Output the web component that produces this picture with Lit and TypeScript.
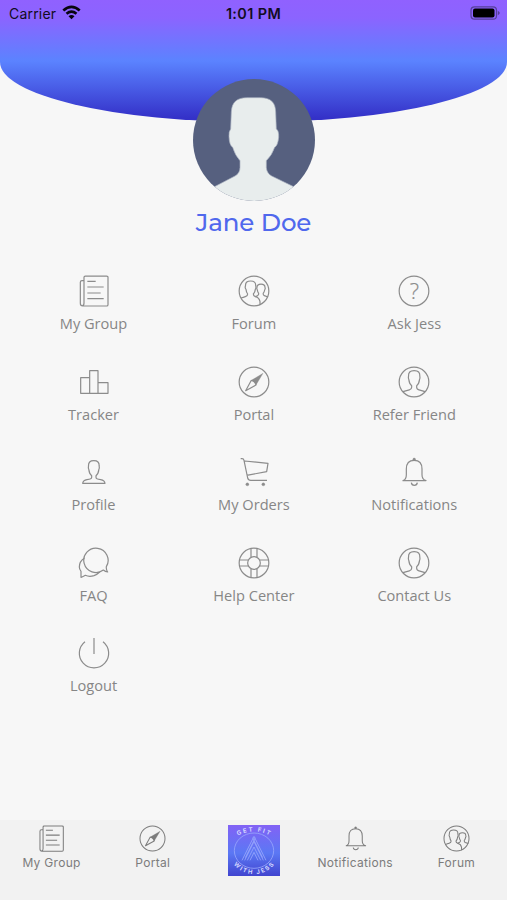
import { LitElement, html, svg, css } from "lit";
import { customElement, property } from "lit/decorators.js";

const personInCircle = svg`
  <circle cx="48" cy="48" r="44.5"/>
  <path d="M15 77 Q27 73 34 71.500 Q41 70 41 64 V59 Q34 54 32.500 41 Q30 37 31.500 31 C31 19 36 14 48.500 14 C61 14 66 19 65.500 31 Q67 37 64.500 41 Q63 54 56 59 V64 Q56 70 63 71.500 Q70 73 81 77"/>`;

const icons: Record<string, unknown> = {
  news: svg`
    <path d="M18 17 H12 Q7 17 7 22 V85 Q7 93 14 93 H86 Q90 93 90 89 V7 Q90 3.500 86 3.500 H22 Q18 3.500 18 7 V84 Q18 92 13 92"/>
    <path d="M28 19 H53 M28 36 H77 M28 54 H68 M28 71 H77"/>`,
  forum: svg`
    <circle cx="48" cy="48" r="44.500"/>
    <path d="M9 69 Q16 67 22 65 Q29 63 29 57 Q25 52 24 43 Q20 38 22.500 32 C22 22 28 18 38 18 C48 18 53.500 22 53 32 Q55 38 52 43 Q51 52 46 57 Q46 63 52 65 Q64 68 66 80 V90"/>
    <path d="M52 65 L58 62.500 Q63 60 62 55 Q59 51 58 45 Q55 40 57 37 C57 31 61 27.500 69 27.500 C77 27.500 81 31 81 37 Q83 41 80 45 Q79 51 75.500 55 Q75 60 79 62 L90 66"/>`,
  help: svg`
    <circle cx="48" cy="48" r="44.500"/>
    <text class="mark" x="49" y="71" text-anchor="middle">?</text>`,
  bars: svg`<path d="M8 35 H35 V82 H8 Z M35 82 V14 H60 V82 Z M60 50 H90 V82 H60"/>`,
  compass: svg`
    <circle cx="48" cy="48" r="44.500"/>
    <path class="solid" d="M75 22 L40 43 L48 48 L54 57 Z"/>
    <path d="M40 43 L23 74 L54 57 Q54 46 40 43"/>`,
  person: personInCircle,
  profile: svg`<path d="M14 82 Q15 73 27 71 Q41 70 41 64 V59 Q34 54 32.500 41 Q30 37 31.500 30 C31 19 36 14 47.500 14 C59 14 64 19 63.500 30 Q65 37 62.500 41 Q61 54 54 59 V64 Q54 70 68 71 Q80 73 81 82 Z"/>`,
  cart: svg`
    <path d="M8 8 H12 Q17 8 18 13 L29 66 Q31 73 38 73 H87 M20 15 L90 22 L86 47 L26 58"/>
    <circle class="solid" cx="28" cy="85" r="4.500"/><circle class="solid" cx="76" cy="85" r="4.500"/>`,
  bell: svg`
    <path d="M15 74 Q25 70 25 56 V39 Q25 13 48.500 13 Q72 13 72 39 V56 Q72 70 84 74 Z M40 80 Q41 88 49 88 Q57 88 58 80"/>
    <circle class="solid" cx="48.500" cy="10" r="4"/>`,
  chat: svg`
    <path d="M76 69 A36.500 36.500 0 1 1 85 59 Q84 68 89 75 Q82 74 76 69 Z"/>
    <path d="M19 34 Q4 43 4 60 Q4 67 9 73 V91 Q15 89 22 85 Q34 91 48 86 Q58 82 65 75"/>`,
  ring: svg`
    <circle cx="48" cy="48" r="44.500"/><circle cx="48" cy="48" r="19"/>
    <path d="M39 4 V31 M57 4 V31 M39 65 V92 M57 65 V92 M4 39 H31 M4 57 H31 M65 39 H92 M65 57 H92"/>`,
  power: svg`<path d="M21 14 A44 44 0 1 0 75 14 M48 3 V51"/>`,
};

@customElement("line-icon")
class LineIcon extends LitElement {
  @property() name = "";
  static styles = css`
    :host { display: block; width: 32px; height: 32px; }
    svg { display: block; width: 100%; height: 100%; fill: none; stroke: currentColor; stroke-width: 3.6; stroke-linejoin: round; }
    .solid { fill: currentColor; stroke-width: 1; }
    .mark { font: 300 66px "Open Sans", sans-serif; fill: currentColor; stroke-width: 0.6; }
  `;
  render() {
    return html`<svg viewBox="0 0 96 96">${icons[this.name]}</svg>`;
  }
}

@customElement("brand-logo")
class BrandLogo extends LitElement {
  static styles = css`
    :host { display: block; width: 52px; height: 51px; }
    svg { display: block; width: 100%; height: 100%; fill: none; stroke: #98a6fb; stroke-width: 2.5; }
    text { font: 700 18px "Inter", sans-serif; fill: #d5d8ff; stroke: none; letter-spacing: 5px; }
  `;
  render() {
    return html`<svg viewBox="0 0 156 153">
      <defs>
        <linearGradient id="bg" x1="0" y1="0" x2="0" y2="1">
          <stop offset="0" stop-color="#8262f5"/><stop offset=".55" stop-color="#5b78f4"/><stop offset="1" stop-color="#4145cf"/>
        </linearGradient>
        <path id="top" d="M16 41 A100 100 0 0 1 140 41"/>
        <path id="bottom" d="M6 98 A77 77 0 0 0 150 98"/>
      </defs>
      <rect width="156" height="153" fill="url(#bg)" stroke="none"/>
      <ellipse cx="78" cy="77" rx="59" ry="53"/>
      <path d="M42 106 L78 34 L114 106 M50 106 L78 50 L106 106 M58 106 L78 66 L98 106 M66 106 L78 82 L90 106 M52 98 L82 38 M104 98 L74 38"/>
      <text><textPath href="#top" startOffset="51%" text-anchor="middle">GET FIT</textPath></text>
      <text><textPath href="#bottom" startOffset="51%" text-anchor="middle">WITH JESS</textPath></text>
    </svg>`;
  }
}

const menu = [
  ["news", "My Group"], ["forum", "Forum"], ["help", "Ask Jess"],
  ["bars", "Tracker"], ["compass", "Portal"], ["person", "Refer Friend"],
  ["profile", "Profile"], ["cart", "My Orders"], ["bell", "Notifications"],
  ["chat", "FAQ"], ["ring", "Help Center"], ["person", "Contact Us"],
  ["power", "Logout"],
];

const tabs = [["news", "My Group"], ["compass", "Portal"], ["logo", ""], ["bell", "Notifications"], ["forum", "Forum"]];

@customElement("app-root")
class AppRoot extends LitElement {
  static styles = css`
    :host { display: flex; flex-direction: column; height: 900px; background: #f7f7f7; overflow: hidden; }
    .header {
      flex: none; height: 122px; box-sizing: border-box;
      background: linear-gradient(#9061ff 0, #8b64ff 18px, #5b83ff 61px, #4a5fe8 86px, #3431c8 118px);
      border-radius: 0 0 50% 50% / 0 0 60px 60px;
    }
    .status {
      display: grid; grid-template-columns: 1fr auto 1fr; align-items: center;
      height: 27px; padding: 0 7px 0 9px; color: #120c22;
      font: 400 14px "Inter", sans-serif;
    }
    .carrier { display: flex; align-items: center; gap: 6px; letter-spacing: 0.2px; }
    .wifi { width: 19px; height: 15px; margin-top: -2px; }
    .time { font-size: 14.4px; font-weight: 600; letter-spacing: 0.4px; margin-left: -2px; }
    .battery { justify-self: end; width: 30px; height: 14px; margin-top: -1px; }
    .avatar { flex: none; width: 122px; height: 122px; margin: -43px auto 0; border-radius: 50%; overflow: hidden; }
    .avatar svg { display: block; }
    .name {
      margin: 5px 0 0; text-align: center; color: #5068ed;
      font: 500 24.5px/32px "Montserrat", "Inter", sans-serif; letter-spacing: -0.1px;
    }
    .menu { display: grid; grid-template-columns: repeat(3, 160.4px); grid-auto-rows: 90.4px; justify-content: center; margin-top: 37.4px; padding-left: 0.8px; }
    .cell { display: flex; flex-direction: column; align-items: center; gap: 6px; color: #8c8c8c; }
    .label { font: 400 14.6px/20px "Open Sans", sans-serif; color: #868686; white-space: nowrap; }
    .tabs {
      display: grid; grid-template-columns: repeat(5, 1fr); flex: none; height: 80px; box-sizing: border-box;
      margin-top: auto; padding-left: 1px; background: #f2f2f2;
    }
    .tab { display: flex; flex-direction: column; align-items: center; padding-top: 5px; color: #7c7c7c; }
    .tab line-icon { width: 27px; height: 27px; }
    .tab-label { margin-top: 3px; font: 400 12px/16px "Inter", sans-serif; letter-spacing: 0.3px; white-space: nowrap; }
  `;
  render() {
    return html`
      <header class="header">
        <div class="status">
          <div class="carrier">Carrier
            <svg class="wifi" viewBox="0 0 19 15" fill="none" stroke="#080510" stroke-width="2.7">
              <path d="M1.300 5.400 Q9.500 -1.800 17.700 5.400 M4.500 8.800 Q9.500 4.600 14.500 8.800"/>
              <path d="M6.500 11.200 Q9.500 8.800 12.500 11.200 L9.500 14.200 Z" fill="#080510" stroke="none"/>
            </svg>
          </div>
          <div class="time">1:01 PM</div>
          <svg class="battery" viewBox="0 0 30 14">
            <rect x="1" y=".8" width="25.500" height="12.400" rx="3.500" fill="none" stroke="#56409a" stroke-width="1.200"/>
            <rect x="3" y="2.600" width="21.500" height="8.800" rx="2" fill="#000"/>
            <path d="M27.800 4.800 Q29.800 6 29.800 7 Q29.800 8 27.800 9.200Z" fill="#56409a"/>
          </svg>
        </div>
      </header>
      <div class="avatar">
        <svg width="122" height="122" viewBox="39 27 366 366">
          <rect x="39" y="27" width="366" height="366" fill="#56607f"/>
          <path fill="#e8eded" stroke="#a9b1c0" stroke-width="2" d="M96 354 L165 318 Q180 310 180 292 V272 Q165 256 158 232 Q148 226 147 200 Q146 184 152 177 L154 125 C156 96 170 84 200 83 H242 C272 84 286 96 287 125 L289 177 Q297 182 296 203 Q293 228 284 232 Q276 256 259 272 V292 Q260 310 275 318 L349 354 V400 H96Z"/>
        </svg>
      </div>
      <h1 class="name">Jane Doe</h1>
      <main class="menu">
        ${menu.map(([icon, label]) => html`<div class="cell"><line-icon name=${icon}></line-icon><span class="label">${label}</span></div>`)}
      </main>
      <nav class="tabs">
        ${tabs.map(([icon, label]) => html`<div class="tab">${icon === "logo"
          ? html`<brand-logo></brand-logo>`
          : html`<line-icon name=${icon}></line-icon><span class="tab-label">${label}</span>`}</div>`)}
      </nav>`;
  }
}
